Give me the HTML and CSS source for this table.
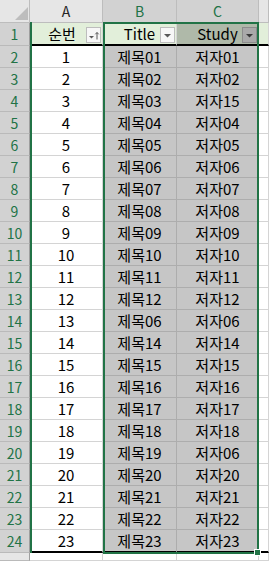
FILE: index.html
```html
<!DOCTYPE html>
<html lang="ko">
<head>
<meta charset="utf-8">
<title>Sheet</title>
<link rel="stylesheet" href="styles.css">
</head>
<body>
<div class="sheet">
  <div class="x ch corner"><svg width="29" height="22" viewBox="0 0 29 22"><polygon points="15,20 28,20 28,7" fill="#bdbdbd"/></svg></div>
  <div class="x ch">A</div>
  <div class="x ch sel">B</div>
  <div class="x ch sel">C</div>
  <div class="x ch"></div>

  <div class="x rh">1</div>
  <div class="x r1 first">순번<span class="fb"><svg width="13" height="14" viewBox="0 0 13 14"><polygon points="2,8 7,8 4.5,10.5" fill="#595959"/><path d="M10 4.5V11.5M8.3 6.3L10 4.5L11.7 6.3" stroke="#595959" stroke-width="1" fill="none"/></svg></span></div>
  <div class="x r1">Title<span class="fb"><svg width="13" height="14" viewBox="0 0 13 14"><polygon points="3,6 10,6 6.5,9.5" fill="#595959"/></svg></span></div>
  <div class="x r1 shade">Study<span class="fb dark"><svg width="13" height="14" viewBox="0 0 13 14"><polygon points="3,6 10,6 6.5,9.5" fill="#3a3a3a"/></svg></span></div>
  <div class="x r1"></div>

  <div class="x rh">2</div><div class="x">1</div><div class="x shade">제목01</div><div class="x shade">저자01</div><div class="x"></div>
  <div class="x rh">3</div><div class="x">2</div><div class="x shade">제목02</div><div class="x shade">저자02</div><div class="x"></div>
  <div class="x rh">4</div><div class="x">3</div><div class="x shade">제목03</div><div class="x shade">저자15</div><div class="x"></div>
  <div class="x rh">5</div><div class="x">4</div><div class="x shade">제목04</div><div class="x shade">저자04</div><div class="x"></div>
  <div class="x rh">6</div><div class="x">5</div><div class="x shade">제목05</div><div class="x shade">저자05</div><div class="x"></div>
  <div class="x rh">7</div><div class="x">6</div><div class="x shade">제목06</div><div class="x shade">저자06</div><div class="x"></div>
  <div class="x rh">8</div><div class="x">7</div><div class="x shade">제목07</div><div class="x shade">저자07</div><div class="x"></div>
  <div class="x rh">9</div><div class="x">8</div><div class="x shade">제목08</div><div class="x shade">저자08</div><div class="x"></div>
  <div class="x rh">10</div><div class="x">9</div><div class="x shade">제목09</div><div class="x shade">저자09</div><div class="x"></div>
  <div class="x rh">11</div><div class="x">10</div><div class="x shade">제목10</div><div class="x shade">저자10</div><div class="x"></div>
  <div class="x rh">12</div><div class="x">11</div><div class="x shade">제목11</div><div class="x shade">저자11</div><div class="x"></div>
  <div class="x rh">13</div><div class="x">12</div><div class="x shade">제목12</div><div class="x shade">저자12</div><div class="x"></div>
  <div class="x rh">14</div><div class="x">13</div><div class="x shade">제목06</div><div class="x shade">저자06</div><div class="x"></div>
  <div class="x rh">15</div><div class="x">14</div><div class="x shade">제목14</div><div class="x shade">저자14</div><div class="x"></div>
  <div class="x rh">16</div><div class="x">15</div><div class="x shade">제목15</div><div class="x shade">저자15</div><div class="x"></div>
  <div class="x rh">17</div><div class="x">16</div><div class="x shade">제목16</div><div class="x shade">저자16</div><div class="x"></div>
  <div class="x rh">18</div><div class="x">17</div><div class="x shade">제목17</div><div class="x shade">저자17</div><div class="x"></div>
  <div class="x rh">19</div><div class="x">18</div><div class="x shade">제목18</div><div class="x shade">저자18</div><div class="x"></div>
  <div class="x rh">20</div><div class="x">19</div><div class="x shade">제목19</div><div class="x shade">저자06</div><div class="x"></div>
  <div class="x rh">21</div><div class="x">20</div><div class="x shade">제목20</div><div class="x shade">저자20</div><div class="x"></div>
  <div class="x rh">22</div><div class="x">21</div><div class="x shade">제목21</div><div class="x shade">저자21</div><div class="x"></div>
  <div class="x rh">23</div><div class="x">22</div><div class="x shade">제목22</div><div class="x shade">저자22</div><div class="x"></div>
  <div class="x rh">24</div><div class="x end">23</div><div class="x shade end">제목23</div><div class="x shade end">저자23</div><div class="x end"></div>

  <div class="x rh off"></div><div class="x"></div><div class="x"></div><div class="x"></div><div class="x"></div>

  <div class="sel-a"></div>
  <div class="sel-bc"></div>
  <div class="handle"></div>
</div>
</body>
</html>
```
FILE: styles.css
```css
html, body {
  margin: 0;
  padding: 0;
  background: #ffffff;
}

body {
  font-family: "Noto Sans CJK KR", "Noto Sans", sans-serif;
}

.sheet {
  position: relative;
  width: 269px;
  height: 561px;
  overflow: hidden;
  display: grid;
  grid-template-columns: 30px 73px 74px 82px 1fr;
  grid-template-rows: 23px 23px repeat(22, 22px) 23px 1fr;
}

.x {
  position: relative;
  box-sizing: border-box;
  border-right: 1px solid #d4d4d4;
  border-bottom: 1px solid #d4d4d4;
  display: flex;
  align-items: center;
  justify-content: center;
  font-size: 15px;
  line-height: 1;
  color: #000000;
  white-space: nowrap;
}

.ch {
  background: #e6e6e6;
  border-right-color: #bdbdbd;
  border-bottom-color: #bdbdbd;
  font-size: 14px;
  color: #262626;
}

.ch.sel {
  background: #d2d2d2;
  color: #217346;
}

.corner svg {
  display: block;
}

.corner {
  align-items: stretch;
  justify-content: stretch;
}

.rh {
  background: #d2d2d2;
  color: #217346;
  font-size: 14px;
  border-right-color: #9e9e9e;
  border-bottom-color: #bababa;
}

.rh.off {
  background: #e6e6e6;
}

.shade {
  background: #c6c6c6;
  border-right-color: #adadad;
  border-bottom-color: #adadad;
}

.r1 {
  background: #e2efda;
  border-bottom: 2px solid #000000;
}

.r1.shade {
  background: #afb9a9;
}

.first {
  padding-right: 8px;
}

.end {
  border-bottom: 2px solid #000000;
}

.fb {
  position: absolute;
  right: 1px;
  bottom: 1px;
  width: 15px;
  height: 16px;
  box-sizing: border-box;
  border: 1px solid #bdbdbd;
  background: #f7f7f7;
}

.fb svg {
  display: block;
}

.fb.dark {
  background: #a9a9a9;
  border-color: #8c8c8c;
}

.sel-a {
  position: absolute;
  left: 30px;
  top: 22px;
  width: 2px;
  height: 531px;
  background: #217346;
}

.sel-bc {
  position: absolute;
  left: 103px;
  top: 22px;
  width: 156px;
  height: 532px;
  box-sizing: border-box;
  border: 2px solid #217346;
}

.handle {
  position: absolute;
  left: 254px;
  top: 549px;
  width: 5px;
  height: 5px;
  background: #217346;
  border: 1px solid #ffffff;
}
```
